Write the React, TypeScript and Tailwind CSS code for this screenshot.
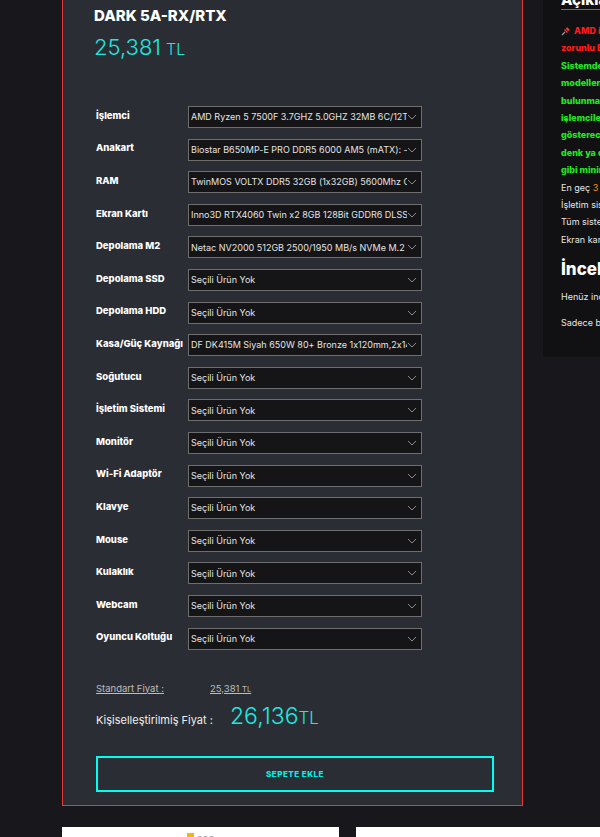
import React from 'react';

interface PartRow {
  label: string;
  value: string;
}

const parts: PartRow[] = [
  { label: 'İşlemci', value: 'AMD Ryzen 5 7500F 3.7GHZ 5.0GHZ 32MB 6C/12T AM5' },
  { label: 'Anakart', value: 'Biostar B650MP-E PRO DDR5 6000 AM5 (mATX): - 2,140 TL' },
  { label: 'RAM', value: 'TwinMOS VOLTX DDR5 32GB (1x32GB) 5600Mhz CL46' },
  { label: 'Ekran Kartı', value: 'Inno3D RTX4060 Twin x2 8GB 128Bit GDDR6 DLSS 3' },
  { label: 'Depolama M2', value: 'Netac NV2000 512GB 2500/1950 MB/s NVMe M.2 SSD' },
  { label: 'Depolama SSD', value: 'Seçili Ürün Yok' },
  { label: 'Depolama HDD', value: 'Seçili Ürün Yok' },
  { label: 'Kasa/Güç Kaynağı', value: 'DF DK415M Siyah 650W 80+ Bronze 1x120mm,2x140mm' },
  { label: 'Soğutucu', value: 'Seçili Ürün Yok' },
  { label: 'İşletim Sistemi', value: 'Seçili Ürün Yok' },
  { label: 'Monitör', value: 'Seçili Ürün Yok' },
  { label: 'Wi-Fi Adaptör', value: 'Seçili Ürün Yok' },
  { label: 'Klavye', value: 'Seçili Ürün Yok' },
  { label: 'Mouse', value: 'Seçili Ürün Yok' },
  { label: 'Kulaklık', value: 'Seçili Ürün Yok' },
  { label: 'Webcam', value: 'Seçili Ürün Yok' },
  { label: 'Oyuncu Koltuğu', value: 'Seçili Ürün Yok' },
];

// kırmızı / yeşil bilgi satırları (sağ panel)
const redLines = ['AMD işlemcili sistemlerde', 'zorunlu BIOS güncellemesi'];
const greenLines = [
  'Sistemde kullanılan anakart',
  'modellerinde stok durumu',
  'bulunmadığı durumlarda',
  'işlemcilerle uyum',
  'gösterecek muadil',
  'denk ya da üst model',
  'gibi minimum değişiklik',
];

const Chevron = () => (
  <svg width="10" height="6" viewBox="0 0 10 6" className="shrink-0">
    <path d="M1 1l4 4 4-4" fill="none" stroke="#8a8a8a" strokeWidth="1" />
  </svg>
);

const Pin = () => (
  <svg width="10" height="10" viewBox="0 0 10 10" className="inline-block mr-[3px] -mt-[2px]">
    <path d="M1 9l3-3" stroke="#9a9a9a" strokeWidth="1.2" />
    <path d="M4 3l3 3-1 1-3-3z" fill="#e53935" />
    <path d="M6 1l3 3-2 1-2-2z" fill="#ff3b30" />
  </svg>
);

const SelectBox: React.FC<{ value: string }> = ({ value }) => (
  <div className="flex h-[22px] w-[234px] items-center border border-[#6e6e6e] bg-[#151517] pl-[2px] pr-[4px]">
    <span className="flex-1 overflow-hidden whitespace-nowrap text-[9px] text-[#e4e4e4] [font-feature-settings:'calt'_0]">
      {value}
    </span>
    <Chevron />
  </div>
);

export default function App() {
  return (
    <div className="h-[837px] w-[600px] overflow-hidden bg-[#18181c] font-['Inter',_'Noto_Sans',_sans-serif]">
      <div className="flex items-start">
        {/* Ana panel */}
        <div className="ml-[62px] w-[461px] shrink-0 border-x border-b border-[#e53935] bg-[#2a2d33] pb-[13px]">
          <div className="pl-[31px] pt-[6px]">
            <h2 className="text-[15px] font-extrabold leading-[20px] text-white">DARK 5A-RX/RTX</h2>
            <div className="mt-[7px] flex items-baseline font-light text-[#1ee8e0]">
              <span className="text-[22px] leading-[28px]">25,381</span>
              <span className="ml-[5px] text-[16px]">TL</span>
            </div>
          </div>

          <div className="mt-[45px] flex flex-col gap-[10.6px] pl-[33px]">
            {parts.map((p) => (
              <div key={p.label} className="flex items-center">
                <span className="w-[92px] -translate-y-[1px] whitespace-nowrap text-[9.5px] font-extrabold text-white">
                  {p.label}
                </span>
                <SelectBox value={p.value} />
              </div>
            ))}
          </div>

          <div className="mt-[32px] pl-[33px]">
            <div className="flex text-[9.5px] text-[#bdbdbd] underline">
              <span className="w-[114px]">Standart Fiyat :</span>
              <span>
                25,381 <span className="text-[7.5px]">TL</span>
              </span>
            </div>
            <div className="mt-[3px] flex items-baseline">
              <span className="w-[134px] text-[11px] text-[#efefef]">Kişiselleştirilmiş Fiyat :</span>
              <span className="text-[23px] font-light text-[#1ee8e0]">26,136</span>
              <span className="text-[17px] font-light text-[#1ee8e0]">TL</span>
            </div>
          </div>

          <div className="mt-[23px] pl-[33px] pr-[28px]">
            <button
              type="button"
              className="flex h-[36px] w-full items-center justify-center border-2 border-[#00fff0] text-[8px] font-extrabold tracking-[0.5px] text-[#00f0e6]"
            >
              SEPETE EKLE
            </button>
          </div>
        </div>

        {/* Sağ panel */}
        <div className="ml-[20px] h-[357px] w-[260px] shrink-0 bg-[#111113] pl-[18px]">
          <div className="-mt-[9px] w-[200px] border-b border-[#e53935] pb-[1px] text-[15px] font-extrabold leading-[17px] text-white">
            Açıklama
          </div>
          <div className="mt-[12px] text-[9px] font-extrabold leading-[17.4px] whitespace-nowrap">
            {redLines.map((l, i) => (
              <div key={l} className="text-[#ff1c1c]">
                {i === 0 && <Pin />}
                {l}
              </div>
            ))}
            {greenLines.map((l) => (
              <div key={l} className="text-[#22e622]">
                {l}
              </div>
            ))}
          </div>
          <div className="text-[9px] leading-[17.4px] whitespace-nowrap text-[#e6e6e6]">
            <div>
              En geç <span className="text-[#ff8c1a]">3</span> iş günü içinde kargoda
            </div>
            <div>İşletim sistemi kurulu gönderilir</div>
            <div>Tüm sistemler test edilir</div>
            <div>Ekran kartı sürücüleri yüklüdür</div>
          </div>
          <h3 className="mt-[10px] text-[17px] font-extrabold leading-[22px] text-white">İncelemeler</h3>
          <p className="mt-[10px] text-[9px] whitespace-nowrap text-[#e6e6e6]">Henüz inceleme yapılmadı.</p>
          <p className="mt-[12px] text-[9px] whitespace-nowrap text-[#e6e6e6]">Sadece bu ürünü satın alanlar</p>
        </div>
      </div>

      {/* Alt kartlar */}
      <div className="mt-[21px] flex gap-[17px] pl-[62px]">
        <div className="h-[60px] w-[277px] shrink-0 bg-white pt-[6px]">
          <div className="flex justify-center gap-[3px]">
            <div className="h-[8px] w-[7px] bg-[#f5b800]" />
            <span className="text-[9px] text-[#9a9a9a]">SSS</span>
          </div>
        </div>
        <div className="h-[60px] w-[277px] shrink-0 bg-white pt-[6px] pl-[52px]">
          <span className="text-[11px] font-bold text-[#e53935]">Kargo</span>
        </div>
      </div>
    </div>
  );
}
